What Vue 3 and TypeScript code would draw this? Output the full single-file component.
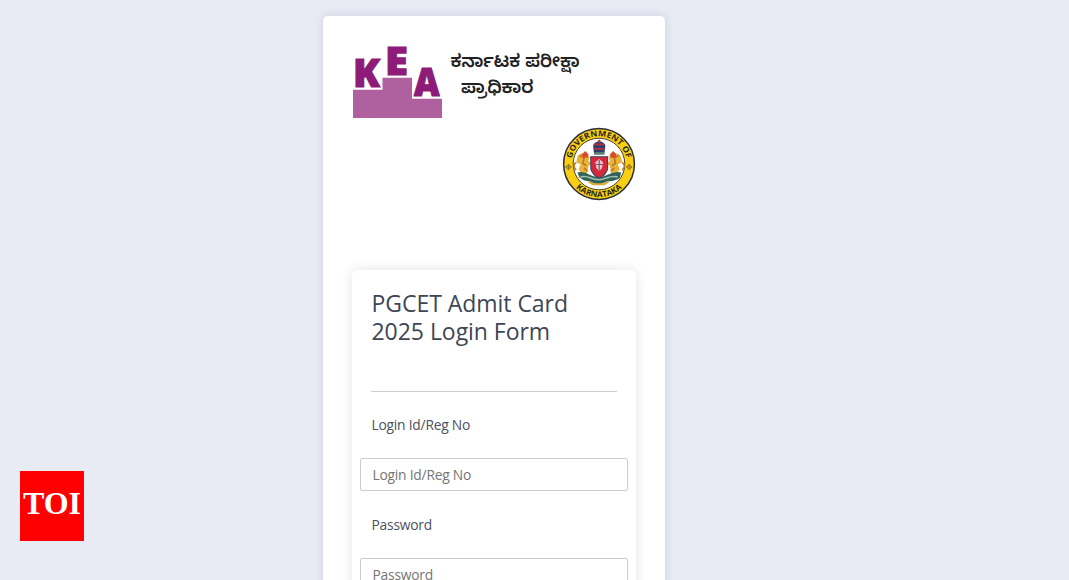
<script setup lang="ts">
interface Field {
  id: string
  label: string
  type: string
}

const fields: Field[] = [
  { id: 'login', label: 'Login Id/Reg No', type: 'text' },
  { id: 'password', label: 'Password', type: 'password' },
]
</script>

<template>
  <div class="page">
    <main class="card">
      <header class="brand">
        <svg class="kea" viewBox="0 0 236 76" width="236" height="76" role="img" aria-label="KEA">
          <path class="steps" d="M1 45.8H30.5V33.8H60V54.8H90V74H1Z" />
          <g class="letters">
            <text x="1" y="43" textLength="27" lengthAdjust="spacingAndGlyphs">K</text>
            <text x="33" y="31" textLength="23" lengthAdjust="spacingAndGlyphs">E</text>
            <text x="62" y="52" textLength="25.5" lengthAdjust="spacingAndGlyphs">A</text>
          </g>
          <g class="kannada">
            <text x="98.5" y="23.2" textLength="129" lengthAdjust="spacingAndGlyphs">ಕರ್ನಾಟಕ ಪರೀಕ್ಷಾ</text>
            <text x="109" y="48.8" textLength="72.5" lengthAdjust="spacingAndGlyphs">ಪ್ರಾಧಿಕಾರ</text>
          </g>
        </svg>
        <svg class="emblem" viewBox="0 0 74 74" width="74" height="74" role="img" aria-label="Government of Karnataka">
          <defs>
            <path id="arc-top" d="M9.2 37A27.8 27.8 0 0 1 64.8 37" />
            <path id="arc-bottom" d="M3.9 37A33.1 33.1 0 0 0 70.1 37" />
          </defs>
          <circle cx="37" cy="37" r="35.4" fill="#f8cf12" stroke="#292b38" stroke-width="1.5" />
          <circle cx="37" cy="37" r="25.8" fill="#fff" stroke="#4b4534" stroke-width="1" />
          <g class="ring-text">
            <text><textPath href="#arc-top" startOffset="50%" text-anchor="middle" textLength="76" lengthAdjust="spacingAndGlyphs">GOVERNMENT OF</textPath></text>
            <text><textPath href="#arc-bottom" startOffset="50%" text-anchor="middle" textLength="51" lengthAdjust="spacingAndGlyphs">KARNATAKA</textPath></text>
          </g>
          <g fill="none" stroke="#8c7620" stroke-width="1">
            <path d="M6.5 37.2L9.3 40L6.5 42.8L3.7 40ZM6.5 37V43M3.5 40H9.5" />
            <path d="M67.2 37.2L70 40L67.2 42.8L64.4 40ZM67.2 37V43M64.2 40H70.2" />
          </g>
          <g transform="translate(37.2 37) scale(1.12) translate(-37.5 -35.5)">
            <g v-for="side in [1, -1]" :key="side" :transform="side === 1 ? undefined : 'translate(75 0) scale(-1 1)'">
              <path d="M18 29Q20 25 25 26L29 29L28 33L31 35L28 37L27 43L24 48H18L22 44L19 40L21 36L17 34Z" fill="#e9b33a" />
              <path d="M20 28L24 30L23 35L26 37M17 41Q13 37 17 34M24 39L27 42" fill="none" stroke="#bc7420" stroke-width="1.4" />
              <path d="M22 27L25 24L28 27L27 30L23 30Z" fill="#d64a30" />
            </g>
            <path d="M18 43Q24 42 29 45Q37 49 45 45Q51 42 57 43L56 48Q51 51 45 51L37 54L28 51Q20 50 18 43Z" fill="#2f6258" />
            <path d="M21 47Q25 46 30 48Q37 51 44 48Q49 46 54 47" fill="none" stroke="#a3bdb0" stroke-width="1.5" />
            <path d="M28 51L32 53.5H42L46 51" fill="none" stroke="#d4ac35" stroke-width="1.8" />
            <path d="M30 29H45V40Q43 46 37.5 48Q32 46 30 40Z" fill="#d6283b" stroke="#40425f" stroke-width="1" />
            <path d="M34 34L37.5 31L41 34L40 39L37.5 42L35 39Z" fill="#e6c5cf" />
            <path d="M37.5 32V42M34 36H41" stroke="#8e4969" stroke-width="1" />
            <path d="M32 19Q33 16 37.5 15Q42 16 43 19L42 27H33Z" fill="#303f69" />
            <path d="M33 18H42M33 22H42" stroke="#b92c42" stroke-width="1.7" />
            <path d="M33 26H42" stroke="#5b8b74" stroke-width="2" />
            <circle cx="37.5" cy="15" r="1.2" fill="#cc3649" />
          </g>
        </svg>
      </header>

      <form class="login" @submit.prevent>
        <h1>PGCET Admit Card<br />2025 Login Form</h1>
        <hr />
        <div v-for="field in fields" :key="field.id" class="field">
          <label :for="field.id">{{ field.label }}</label>
          <input :id="field.id" :type="field.type" :placeholder="field.label" />
        </div>
      </form>
    </main>
    <div class="toi">TOI</div>
  </div>
</template>

<style>
body {
  margin: 0;
  overflow: hidden;
  background: #e8ebf4;
}
</style>

<style scoped>
* {
  box-sizing: border-box;
}
.page {
  height: 580px;
  padding: 16px 0 0 323px;
  overflow: hidden;
  background: #e8ebf4;
  font-family: 'Open Sans', sans-serif;
}
.card {
  width: 341.5px;
  height: 700px;
  padding: 28px 28.5px 0 29px;
  border-radius: 5px;
  background: #fff;
  box-shadow: 0 0 9px rgba(60, 70, 100, 0.16);
}
.brand {
  display: flex;
  flex-direction: column;
  height: 226.4px;
}
.kea {
  display: block;
  overflow: visible;
}
.steps {
  fill: #af609f;
}
.letters text {
  fill: #8e1b78;
  stroke: #8e1b78;
  stroke-width: 1.2px;
  font: 800 39.5px 'Open Sans', sans-serif;
}
.kannada text {
  fill: #222;
  font: 600 18px 'Noto Sans Kannada', 'Noto Sans', sans-serif;
}
.emblem {
  display: block;
  align-self: flex-end;
  margin-top: 7.4px;
}
.ring-text text {
  fill: #292719;
  font: 700 8px 'Open Sans', sans-serif;
}
.login {
  height: 440px;
  padding: 18.6px 8px 0;
  border-radius: 5px;
  background: #fff;
  box-shadow: 0 0 12px rgba(0, 0, 0, 0.11);
}
h1 {
  margin: 0 11.5px;
  color: #3d4656;
  font-size: 23px;
  font-weight: 400;
  line-height: 28px;
  letter-spacing: -0.04px;
}
hr {
  height: 1px;
  margin: 46px 11px 23px;
  border: 0;
  background: #cfcfcf;
}
.field {
  height: 100px;
}
label {
  display: block;
  height: 43px;
  padding-left: 11.5px;
  color: #4b5261;
  font-size: 13.8px;
  letter-spacing: -0.22px;
  line-height: 19px;
}
input {
  display: block;
  width: 100%;
  height: 33px;
  padding: 0 11.5px;
  border: 1px solid #cdcdcd;
  border-radius: 2px;
  outline: 0;
  background: #fff;
  font: 13.8px 'Open Sans', sans-serif;
  letter-spacing: -0.22px;
}
input::placeholder {
  color: #757575;
  opacity: 1;
}
.toi {
  position: fixed;
  left: 20px;
  top: 471px;
  width: 64px;
  height: 70px;
  background: #f00;
  color: #fff;
  font: 700 32px/64px 'Liberation Serif', serif;
  text-align: center;
}
</style>
